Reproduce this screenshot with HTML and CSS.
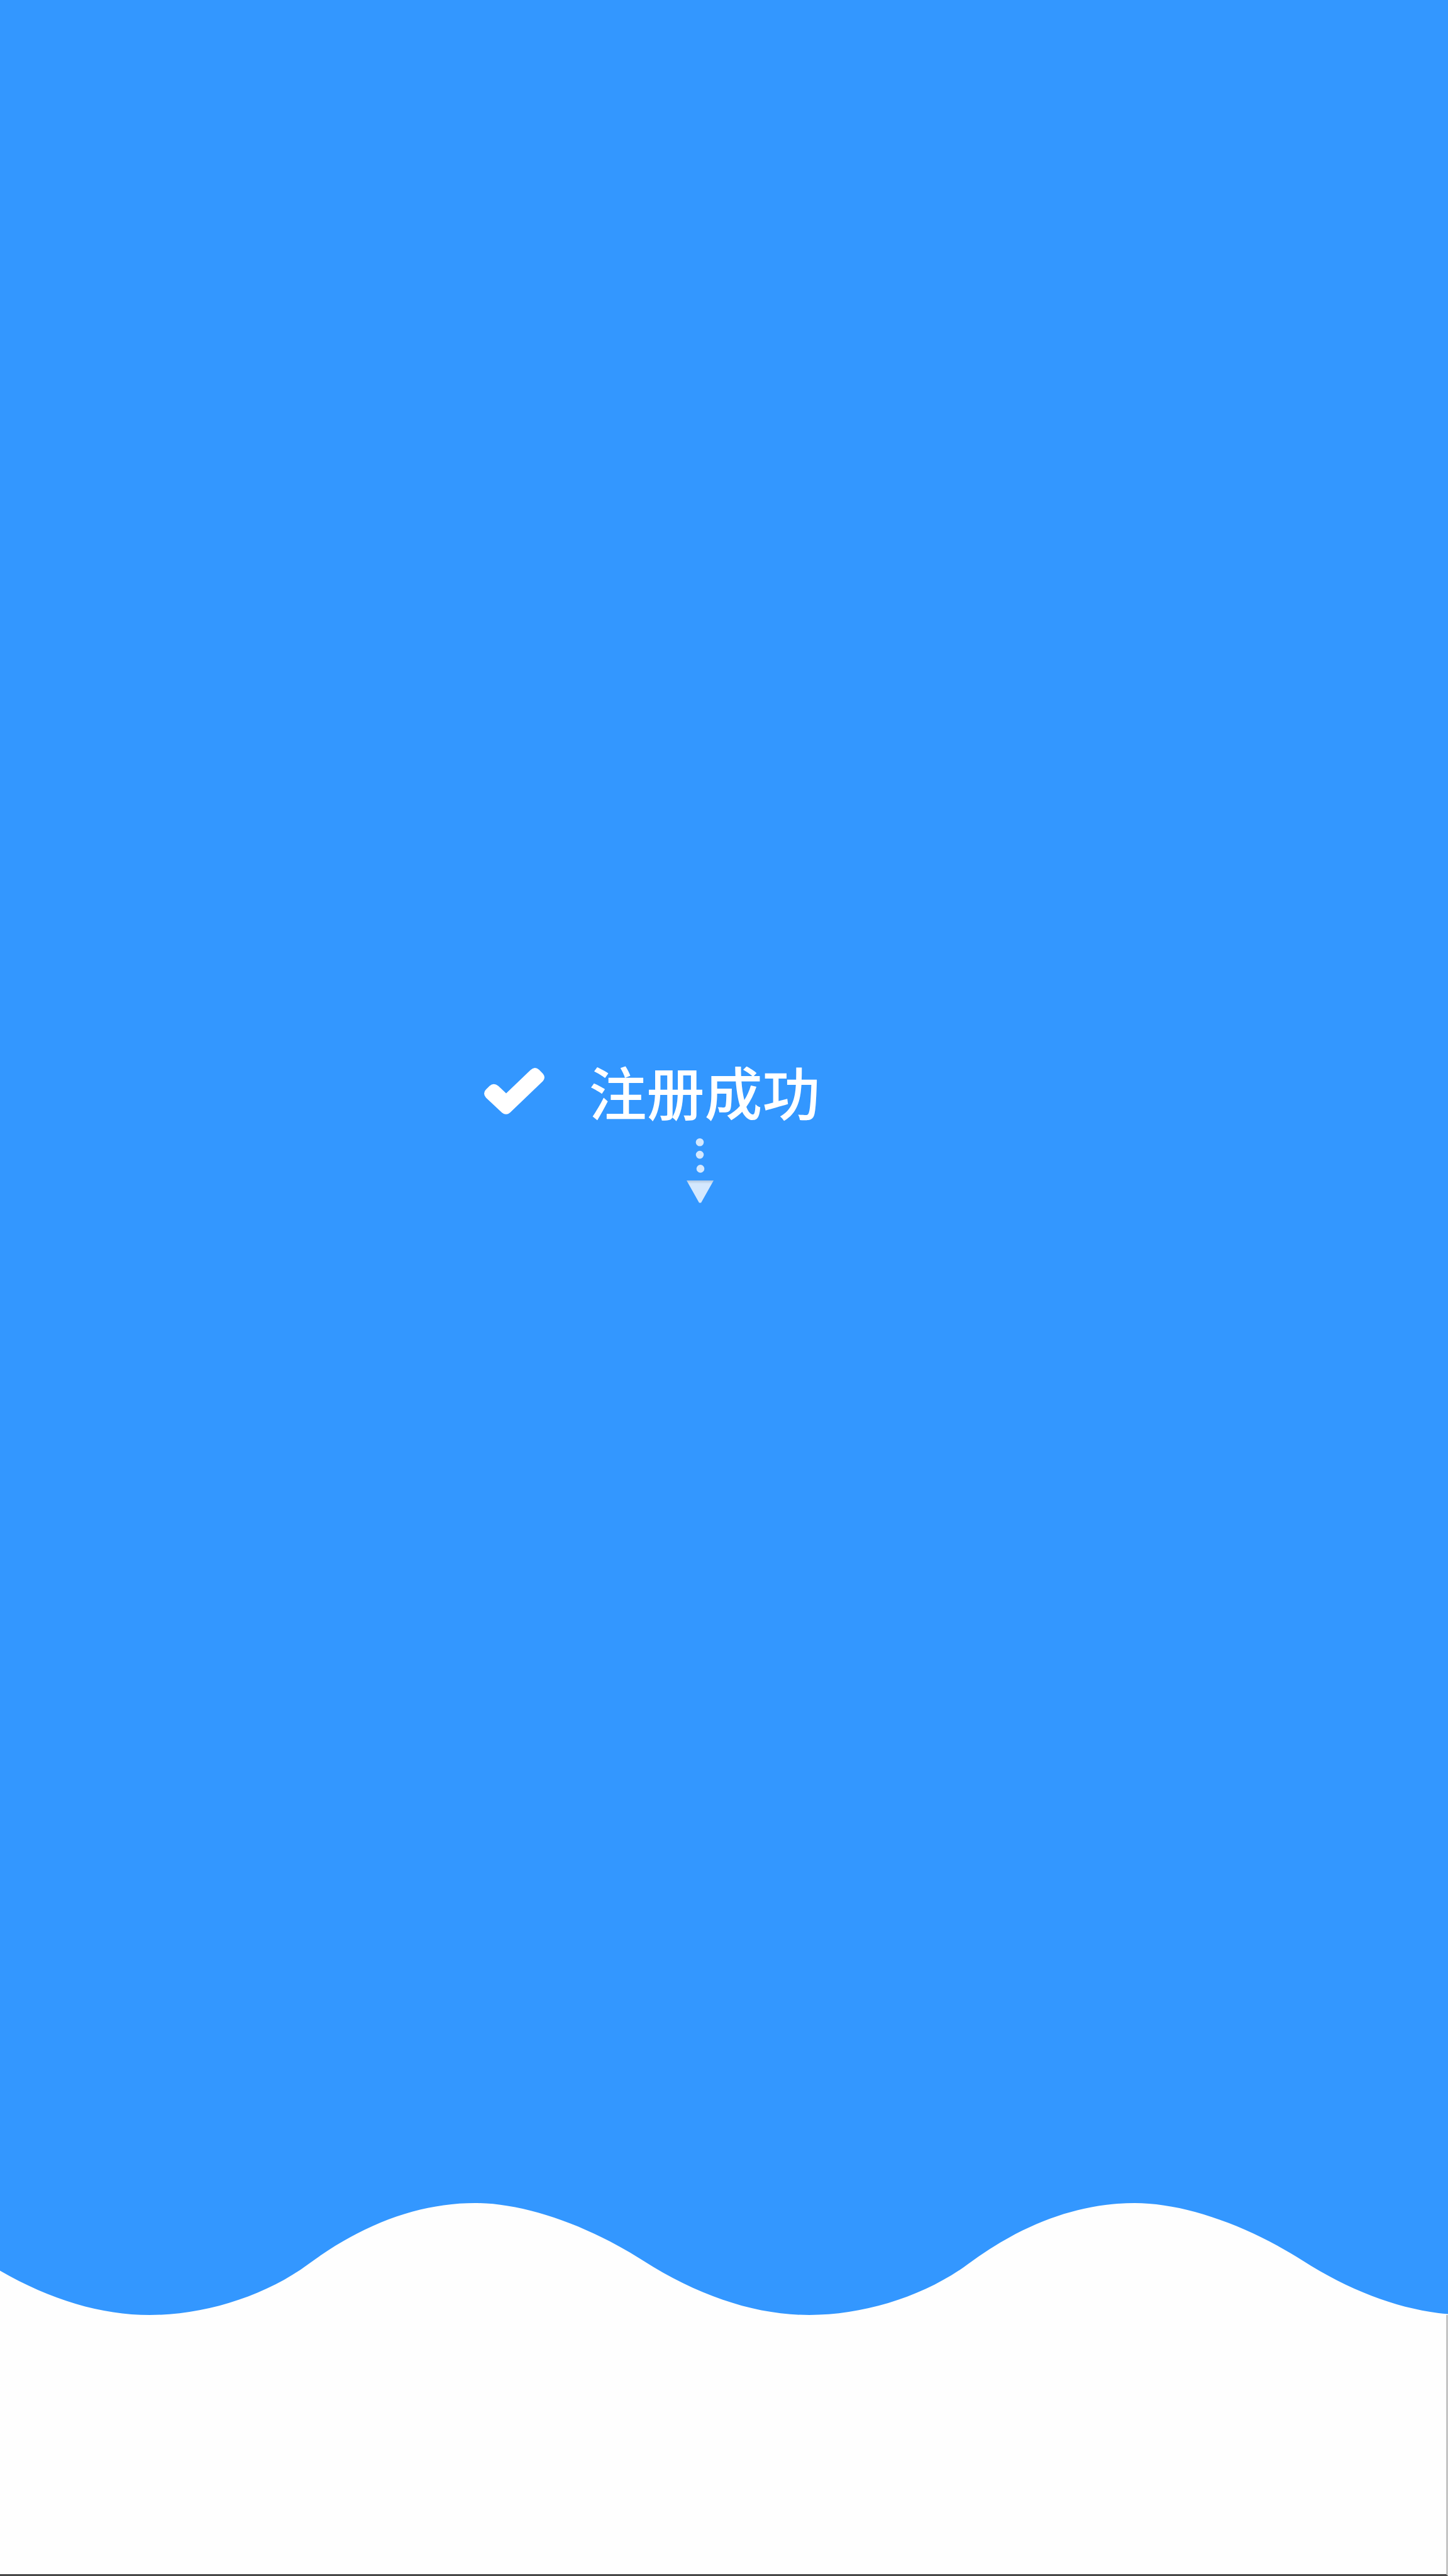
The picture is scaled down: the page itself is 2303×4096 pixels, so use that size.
FILE: index.html
```html
<!DOCTYPE html>
<html lang="zh-CN">
<head>
<meta charset="utf-8">
<meta name="viewport" content="width=device-width, initial-scale=1">
<title>注册成功</title>
<link rel="stylesheet" href="styles.css">
</head>
<body>
<main class="page">
  <section class="hero">
    <div class="status">
      <svg class="check" viewBox="0 0 348 268" aria-hidden="true">
        <path d="M0 148Q0 134 11 124L31 104Q55 82 82 104L127 147L267 13Q292 -12 317 11L339 33Q357 54 339 76L149 258Q127 277 103 258L11 172Q0 160 0 148Z"/>
      </svg>
      <h1 class="title">注册成功</h1>
    </div>
    <svg class="arrow" viewBox="0 0 43 103" aria-hidden="true">
      <defs>
        <linearGradient id="shade" x1="0" y1="0" x2="0" y2="1">
          <stop offset="0" stop-color="#b3c8e0"/>
          <stop offset="0.15" stop-color="#d4e8fe"/>
        </linearGradient>
      </defs>
      <circle cx="21" cy="6.3" r="6.3"/>
      <circle cx="21" cy="26.1" r="6.3"/>
      <circle cx="22" cy="48.4" r="6.3"/>
      <path d="M0 67H43L23 102.500H20Z" fill="url(#shade)"/>
    </svg>
  </section>
  <svg class="wave" viewBox="0 132 3124 646" preserveAspectRatio="none" aria-hidden="true">
    <path d="M-35 465C86 671 208 778 323 778C443 778 573 667 665 485C782 252 905 132 1025 132C1130 132 1265 255 1388 465C1509 671 1631 778 1746 778C1866 778 1996 667 2088 485C2205 252 2328 132 2448 132C2553 132 2688 255 2811 465C2932 671 3054 778 3169 778H-35Z"/>
  </svg>
  <footer class="base"></footer>
</main>
</body>
</html>
```
FILE: styles.css
```css
* {
  box-sizing: border-box;
}

body {
  margin: 0;
  background: #3397ff;
  font-family: "Noto Sans CJK SC", sans-serif;
}

.page {
  display: flex;
  flex-direction: column;
  min-height: 100vh;
}

.hero {
  flex: 1;
  display: flex;
  flex-direction: column;
  align-items: center;
  padding-top: 1684px;
}

.status {
  display: flex;
  align-items: flex-start;
  gap: 70px;
  padding-right: 228px;
}

.check {
  width: 96px;
  height: 74px;
  margin-top: 14px;
  fill: #fff;
}

.title {
  margin: 0;
  color: #fff;
  font-size: 92px;
  font-weight: 500;
  line-height: 100px;
}

.arrow {
  width: 43px;
  height: 103px;
  margin-top: 26px;
  margin-right: 77px;
  fill: #d4e8fe;
}

.wave {
  display: block;
  width: 100%;
  height: 178px;
  fill: #fefefe;
}

.base {
  height: 415px;
  background: #fefefe;
  border-right: 3px solid #c4c4c4;
  border-bottom: 3px solid #484848;
}
```
